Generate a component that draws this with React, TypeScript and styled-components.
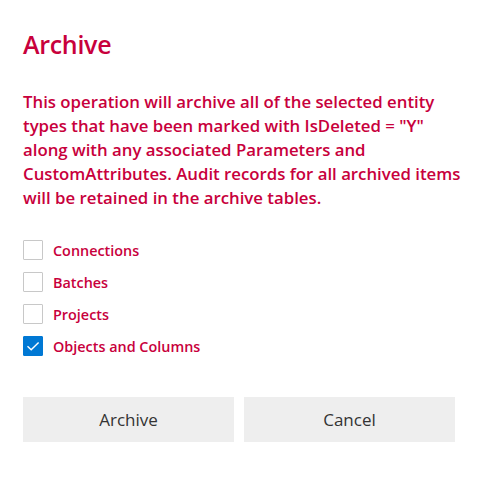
import React, { useState } from 'react';
import styled, { createGlobalStyle } from 'styled-components';

const GlobalStyle = createGlobalStyle`
  html, body {
    margin: 0;
    padding: 0;
    background: #ffffff;
  }
  body {
    font-family: "Open Sans", "Noto Sans", sans-serif;
  }
`;

const accent = '#c8003c';

type Item = { label: string; checked: boolean };

const initial: Item[] = [
    { label: 'Connections', checked: false },
    { label: 'Batches', checked: false },
    { label: 'Projects', checked: false },
    { label: 'Objects and Columns', checked: true },
];

export default function App() {
    const [items, setItems] = useState(initial);

    const toggle = (i: number) =>
        setItems(items.map((it, idx) => (idx === i ? { ...it, checked: !it.checked } : it)));

    return (
        <>
            <GlobalStyle />
            <Dialog>
                <Title>Archive</Title>
                <Message>
                    This operation will archive all of the selected entity types that have been marked
                    with IsDeleted = "Y" along with any associated Parameters and CustomAttributes.
                    Audit records for all archived items will be retained in the archive tables.
                </Message>
                <Options>
                    {items.map((it, i) => (
                        <Option key={it.label} onClick={() => toggle(i)}>
                            <Box $checked={it.checked}>
                                {it.checked && (
                                    <svg width="14" height="14" viewBox="0 0 14 14">
                                        <path
                                            d="M1.5 7.2 L5.2 10.8 L12.6 3.4"
                                            fill="none"
                                            stroke="#fff"
                                            strokeWidth="1.4"
                                        />
                                    </svg>
                                )}
                            </Box>
                            <Label>{it.label}</Label>
                        </Option>
                    ))}
                </Options>
                <Actions>
                    <Button>Archive</Button>
                    <Button>Cancel</Button>
                </Actions>
            </Dialog>
        </>
    );
}

const Dialog = styled.div`
    width: 489px;
    box-sizing: border-box;
    padding: 26px 23px 0 23px;
`;

const Title = styled.h1`
    margin: 0;
    font-size: 25px;
    line-height: 36px;
    font-weight: 600;
    color: ${accent};
    letter-spacing: -0.3px;
`;

const Message = styled.p`
    margin: 28px 0 0 0;
    font-size: 16.8px;
    line-height: 24px;
    font-weight: 600;
    color: ${accent};
`;

const Options = styled.div`
    margin-top: 30px;
    display: flex;
    flex-direction: column;
    gap: 12px;
`;

const Option = styled.label`
    display: flex;
    align-items: center;
    gap: 10px;
    cursor: pointer;
    height: 20px;
`;

const Box = styled.span<{ $checked: boolean }>`
    width: 20px;
    height: 20px;
    box-sizing: border-box;
    display: flex;
    align-items: center;
    justify-content: center;
    border: 1px solid ${({ $checked }) => ($checked ? '#0078d4' : '#c8c8c8')};
    background: ${({ $checked }) => ($checked ? '#0078d4' : '#fff')};
    border-radius: 1px;
`;

const Label = styled.span`
    font-size: 14.4px;
    font-weight: 600;
    color: ${accent};
`;

const Actions = styled.div`
    margin-top: 41px;
    display: flex;
    gap: 10px;
    width: 432px;
`;

const Button = styled.button`
    flex: 1;
    height: 45px;
    border: none;
    background: #eeeeee;
    color: #333333;
    font-family: "Open Sans", "Noto Sans", sans-serif;
    font-size: 17px;
    font-weight: 400;
    cursor: pointer;
`;
